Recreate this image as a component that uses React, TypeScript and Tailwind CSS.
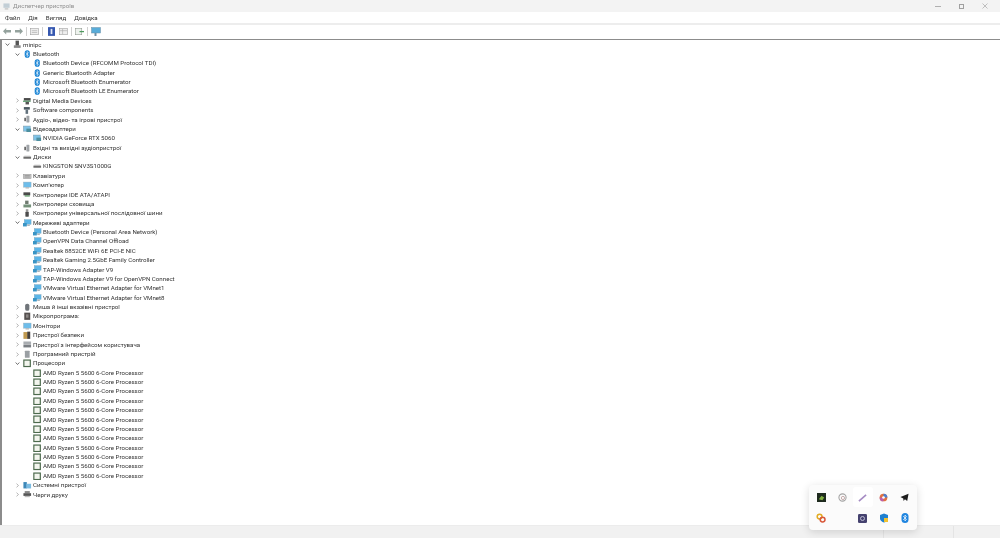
import type { ReactNode } from "react"

type IconName =
  | "pc" | "bt" | "media" | "soft" | "audio" | "monitor" | "disk" | "keyboard"
  | "computer" | "ide" | "storage" | "usb" | "net" | "mouse" | "firmware"
  | "security" | "hid" | "swdev" | "cpu" | "system" | "printer"

interface Row {
  label: string
  level: 0 | 1 | 2
  icon: IconName
  open?: boolean
}

const cpuRows: Row[] = Array.from({ length: 12 }, () => ({
  label: "AMD Ryzen 5 5600 6-Core Processor",
  level: 2,
  icon: "cpu",
}))

const rows: Row[] = [
  { label: "minipc", level: 0, icon: "pc", open: true },
  { label: "Bluetooth", level: 1, icon: "bt", open: true },
  { label: "Bluetooth Device (RFCOMM Protocol TDI)", level: 2, icon: "bt" },
  { label: "Generic Bluetooth Adapter", level: 2, icon: "bt" },
  { label: "Microsoft Bluetooth Enumerator", level: 2, icon: "bt" },
  { label: "Microsoft Bluetooth LE Enumerator", level: 2, icon: "bt" },
  { label: "Digital Media Devices", level: 1, icon: "media" },
  { label: "Software components", level: 1, icon: "soft" },
  { label: "Аудіо-, відео- та ігрові пристрої", level: 1, icon: "audio" },
  { label: "Відеоадаптери", level: 1, icon: "monitor", open: true },
  { label: "NVIDIA GeForce RTX 5060", level: 2, icon: "monitor" },
  { label: "Вхідні та вихідні аудіопристрої", level: 1, icon: "audio" },
  { label: "Диски", level: 1, icon: "disk", open: true },
  { label: "KINGSTON SNV3S1000G", level: 2, icon: "disk" },
  { label: "Клавіатури", level: 1, icon: "keyboard" },
  { label: "Комп'ютер", level: 1, icon: "computer" },
  { label: "Контролери IDE ATA/ATAPI", level: 1, icon: "ide" },
  { label: "Контролери сховища", level: 1, icon: "storage" },
  { label: "Контролери універсальної послідовної шини", level: 1, icon: "usb" },
  { label: "Мережеві адаптери", level: 1, icon: "net", open: true },
  { label: "Bluetooth Device (Personal Area Network)", level: 2, icon: "net" },
  { label: "OpenVPN Data Channel Offload", level: 2, icon: "net" },
  { label: "Realtek 8852CE WiFi 6E PCI-E NIC", level: 2, icon: "net" },
  { label: "Realtek Gaming 2.5GbE Family Controller", level: 2, icon: "net" },
  { label: "TAP-Windows Adapter V9", level: 2, icon: "net" },
  { label: "TAP-Windows Adapter V9 for OpenVPN Connect", level: 2, icon: "net" },
  { label: "VMware Virtual Ethernet Adapter for VMnet1", level: 2, icon: "net" },
  { label: "VMware Virtual Ethernet Adapter for VMnet8", level: 2, icon: "net" },
  { label: "Миша й інші вказівні пристрої", level: 1, icon: "mouse" },
  { label: "Мікропрограма:", level: 1, icon: "firmware" },
  { label: "Монітори", level: 1, icon: "computer" },
  { label: "Пристрої безпеки", level: 1, icon: "security" },
  { label: "Пристрої з інтерфейсом користувача", level: 1, icon: "hid" },
  { label: "Програмний пристрій", level: 1, icon: "swdev" },
  { label: "Процесори", level: 1, icon: "cpu", open: true },
  ...cpuRows,
  { label: "Системні пристрої", level: 1, icon: "system" },
  { label: "Черги друку", level: 1, icon: "printer" },
]

function TreeIcon({ name }: { name: IconName }) {
  const shapes: Record<IconName, ReactNode> = {
    pc: (
      <>
        <rect x="3" y="0.5" width="4" height="6" fill="#555" />
        <rect x="1" y="6" width="8" height="3" fill="#888" />
      </>
    ),
    bt: (
      <>
        <rect x="2" y="0" width="6" height="9" rx="3" fill="#1682d4" />
        <path d="M3.4 2.8 6.4 6 5 7.5V1.5L6.4 3 3.4 6.2" stroke="#fff" strokeWidth="0.7" fill="none" />
      </>
    ),
    media: (
      <>
        <rect x="1" y="1" width="8" height="3" fill="#4a4a4a" />
        <rect x="0" y="4" width="9" height="1.5" fill="#5c9b6d" />
        <rect x="3" y="5.5" width="4" height="3" fill="#555" />
      </>
    ),
    soft: (
      <>
        <rect x="1" y="1" width="7" height="3" fill="#4d5a62" />
        <rect x="3" y="4" width="3" height="5" fill="#63727c" />
      </>
    ),
    audio: (
      <>
        <rect x="4" y="0.5" width="3.5" height="8" rx="0.5" fill="#a0a4a8" />
        <rect x="1.5" y="3" width="2" height="4" fill="#666" />
      </>
    ),
    monitor: (
      <>
        <rect x="0.5" y="1" width="8" height="6" fill="#7fc4e8" stroke="#7d98a8" strokeWidth="0.6" />
        <rect x="4" y="4" width="5.5" height="4" fill="#4d8f9f" />
      </>
    ),
    disk: (
      <>
        <rect x="0.5" y="4" width="9" height="2.5" fill="#6d6d6d" />
        <rect x="1.5" y="3" width="7" height="1" fill="#b5b5b5" />
      </>
    ),
    keyboard: (
      <>
        <rect x="0.5" y="2.5" width="9" height="5" fill="#c4c4c4" stroke="#888" strokeWidth="0.5" />
        <path d="M2 4h6M2 5.7h6" stroke="#777" strokeWidth="0.6" />
      </>
    ),
    computer: (
      <>
        <rect x="0.5" y="1" width="9" height="6" fill="#6dbdea" stroke="#9ab0bd" strokeWidth="0.5" />
        <rect x="3" y="7.3" width="4" height="1.2" fill="#aaa" />
      </>
    ),
    ide: (
      <>
        <rect x="0.5" y="2.5" width="8" height="3.5" fill="#4a4a4a" />
        <rect x="2" y="6" width="6" height="1.5" fill="#5d9a68" />
      </>
    ),
    storage: (
      <>
        <rect x="2.5" y="0.5" width="4" height="4" fill="#6f7a70" />
        <rect x="0.5" y="5" width="9" height="3.5" fill="#74917a" />
      </>
    ),
    usb: (
      <>
        <rect x="3.3" y="0" width="3" height="3" fill="#9a9a9a" />
        <rect x="2.8" y="3" width="4" height="6" rx="1" fill="#4c4c4c" />
      </>
    ),
    net: (
      <>
        <rect x="1.5" y="0.5" width="8" height="5.5" fill="#5cb6e8" stroke="#7fa3b8" strokeWidth="0.5" />
        <rect x="0" y="4.5" width="4.5" height="4" fill="#3a94c4" />
        <rect x="5" y="6.5" width="3" height="1.5" fill="#aab4ba" />
      </>
    ),
    mouse: <rect x="2.5" y="0.5" width="5" height="8.5" rx="2.3" fill="#70757a" />,
    firmware: (
      <>
        <rect x="1.5" y="0.5" width="7" height="8.5" fill="#55504f" />
        <rect x="3.5" y="2.5" width="3" height="4" fill="#8c8785" />
      </>
    ),
    security: (
      <>
        <rect x="0.5" y="1" width="5" height="8" fill="#c09a50" />
        <rect x="5" y="0.5" width="3.5" height="8.5" fill="#45413e" />
      </>
    ),
    hid: (
      <>
        <rect x="0.5" y="1.5" width="9" height="3" fill="#a9adb1" />
        <rect x="0.5" y="5" width="9" height="3.5" fill="#7a7f84" />
      </>
    ),
    swdev: <rect x="2.2" y="0.5" width="5.6" height="8.5" rx="0.6" fill="#9a9fa3" />,
    cpu: <rect x="1" y="1" width="7.6" height="7.6" fill="#f3f5ee" stroke="#4d6a4d" strokeWidth="1.4" />,
    system: (
      <>
        <rect x="0.5" y="1" width="4" height="7.5" fill="#3e88b8" />
        <rect x="4" y="3" width="5.5" height="5.5" fill="#7cbce2" />
      </>
    ),
    printer: (
      <>
        <rect x="2" y="1" width="6" height="2.5" fill="#8a8a8a" />
        <rect x="0.5" y="3.5" width="9" height="3.2" fill="#555" />
        <rect x="2" y="6.7" width="6" height="1.5" fill="#bbb" />
      </>
    ),
  }
  return (
    <svg viewBox="0 0 10 9.5" className="h-[8.5px] w-[8.5px] shrink-0">
      {shapes[name]}
    </svg>
  )
}

function Chevron({ open }: { open?: boolean }) {
  return (
    <svg viewBox="0 0 6 6" className="size-[5px] shrink-0">
      {open ? (
        <path d="M0.8 1.8 3 4.2 5.2 1.8" fill="none" stroke="#555" strokeWidth="1" />
      ) : (
        <path d="M1.8 0.8 4.2 3 1.8 5.2" fill="none" stroke="#a6a6a6" strokeWidth="1" />
      )}
    </svg>
  )
}

function TreeRow({ row }: { row: Row }) {
  const indent = row.level === 0 ? "pl-[3px]" : row.level === 1 ? "pl-[13px]" : "pl-[23px]"
  return (
    <div className={`flex h-[9.39px] items-center whitespace-nowrap ${indent}`}>
      <span className="flex w-[8px] shrink-0 items-center">
        {row.level < 2 && <Chevron open={row.open} />}
      </span>
      <TreeIcon name={row.icon} />
      <span className="ml-[1.5px] text-[6.15px] leading-none text-[#333]">{row.label}</span>
    </div>
  )
}

function Sep() {
  return <span className="mx-[2px] h-[9px] w-px bg-[#d0d0d0]" />
}

function Toolbar() {
  return (
    <div className="flex h-[14px] items-center gap-[1px] pb-[1px] pl-[3px]">
      <svg viewBox="0 0 10 8" className="w-[8px]"><path d="M0 4 4 0v2.4h6v3.2H4V8z" fill="#94a29d" /></svg>
      <svg viewBox="0 0 10 8" className="ml-[3px] w-[8px]"><path d="M10 4 6 0v2.4H0v3.2h6V8z" fill="#94a29d" /></svg>
      <Sep />
      <svg viewBox="0 0 10 8" className="w-[9px]">
        <rect x="0.5" y="0.5" width="9" height="7" fill="#eee" stroke="#999" strokeWidth="0.6" />
        <path d="M2 3h6M2 5h6" stroke="#aaa" strokeWidth="0.7" />
      </svg>
      <Sep />
      <svg viewBox="0 0 8 10" className="ml-[2px] h-[9px] w-[7px]">
        <rect width="8" height="10" fill="#3557b0" />
        <rect x="3" y="2" width="2" height="6" fill="#dfe6f5" />
      </svg>
      <svg viewBox="0 0 10 8" className="ml-[3px] w-[9px]">
        <rect x="0.5" y="0.5" width="9" height="7" fill="#eee" stroke="#999" strokeWidth="0.6" />
        <path d="M4 1v6M1 3h8" stroke="#aaa" strokeWidth="0.7" />
      </svg>
      <Sep />
      <svg viewBox="0 0 10 8" className="w-[9px]">
        <rect x="0.5" y="0.5" width="7" height="7" fill="#eef2ee" stroke="#8a948a" strokeWidth="0.6" />
        <path d="M5 4h5" stroke="#4c9a5c" strokeWidth="1.4" />
      </svg>
      <Sep />
      <svg viewBox="0 0 10 9" className="w-[10px]">
        <rect x="0.5" y="0.5" width="9" height="5.5" fill="#58acd9" stroke="#6d8fa5" strokeWidth="0.5" />
        <rect x="3.5" y="6" width="2" height="3" fill="#6d8fa5" />
      </svg>
    </div>
  )
}

function TrayPopup() {
  return (
    <div className="absolute left-[809px] top-[485px] grid h-[45px] w-[108px] grid-cols-5 grid-rows-[21px_21px] place-items-center rounded-[4px] bg-[#fbfbfb] px-[2px] pt-[1.5px] shadow-[0_2px_8px_rgba(0,0,0,0.14)]">
      <svg viewBox="0 0 10 10" className="size-[9px]">
        <rect width="10" height="10" fill="#1e2a1e" />
        <path d="M2 7 5 3l3 2-2 3z" fill="#7fae3f" />
      </svg>
      <svg viewBox="0 0 10 10" className="size-[9px]">
        <circle cx="5" cy="5" r="4" fill="none" stroke="#a5a5a5" strokeWidth="1.2" />
        <circle cx="5.5" cy="5.5" r="1.8" fill="none" stroke="#b99a9a" strokeWidth="0.9" />
      </svg>
      <span className="flex size-[20px] items-center justify-center rounded-[3px] bg-white">
        <svg viewBox="0 0 10 10" className="size-[9px]">
          <path d="M1 9 9 2" stroke="#a68cc4" strokeWidth="1.8" />
        </svg>
      </span>
      <svg viewBox="0 0 10 10" className="size-[9px]">
        <circle cx="5" cy="5" r="4.3" fill="#e2713e" />
        <path d="M5 .7A4.3 4.3 0 0 1 9.3 5H5z" fill="#4a7fd0" />
        <path d="M.7 5A4.3 4.3 0 0 0 5 9.3V5z" fill="#b95fb0" />
        <circle cx="5" cy="5" r="1.5" fill="#fff" />
      </svg>
      <svg viewBox="0 0 10 10" className="size-[9px]">
        <path d="M0.5 4.5 9.5 0.8 8 9 5.5 7 4 8.8 3.6 6z" fill="#1c1c1c" />
      </svg>
      <svg viewBox="0 0 10 10" className="size-[10px]">
        <circle cx="3.6" cy="3.6" r="2.4" fill="none" stroke="#e2ab22" strokeWidth="1.5" />
        <circle cx="6.6" cy="6.6" r="2.4" fill="none" stroke="#d9583a" strokeWidth="1.5" />
      </svg>
      <span />
      <svg viewBox="0 0 10 10" className="size-[9px]">
        <rect width="10" height="10" rx="1.5" fill="#45426f" />
        <circle cx="5" cy="5" r="2.2" fill="none" stroke="#c9c9de" strokeWidth="1" />
      </svg>
      <svg viewBox="0 0 10 10" className="size-[10px]">
        <path d="M5 0.5 9 2v3.5C9 7.5 7 9 5 9.5 3 9 1 7.5 1 5.5V2z" fill="#1f7fcf" />
        <path d="M5 5h4v4H5z" fill="#f2c230" />
      </svg>
      <svg viewBox="0 0 8 10" className="h-[10px] w-[8px]">
        <rect x="0.5" width="7" height="10" rx="3.5" fill="#2186e0" />
        <path d="M2.2 3 5.4 6.4 4 8V2L5.4 3.6 2.2 7" stroke="#fff" strokeWidth="0.7" fill="none" />
      </svg>
    </div>
  )
}

export default function App() {
  return (
    <div className="relative flex h-[538px] w-[1000px] flex-col overflow-hidden bg-white font-['Roboto','Noto_Sans',sans-serif] blur-[0.3px]">
      <header className="flex h-[12px] items-center justify-between bg-[#f3f3f3]">
        <div className="flex items-center gap-[3px] pl-[3px]">
          <svg viewBox="0 0 8 8" className="size-[7px]">
            <rect x="0.5" y="0.5" width="7" height="5" fill="#c2ced6" />
            <rect x="2" y="6" width="4" height="1.5" fill="#c4c4c4" />
          </svg>
          <span className="text-[6.15px] leading-none text-[#8f8f8f]">Диспетчер пристроїв</span>
        </div>
        <div className="flex items-center gap-[18px] pr-[12px]">
          <span className="h-px w-[6px] bg-[#b0b0b0]" />
          <span className="size-[5px] border border-[#a0a0a0]" />
          <svg viewBox="0 0 6 6" className="size-[6px]">
            <path d="M.5.5l5 5M5.5.5l-5 5" stroke="#b0b0b0" strokeWidth="0.8" />
          </svg>
        </div>
      </header>
      <nav className="flex h-[11px] items-center gap-[8px] bg-white pl-[5px] pt-[1px] text-[6.15px] leading-none text-[#333]">
        <span>Файл</span>
        <span>Дія</span>
        <span>Вигляд</span>
        <span>Довідка</span>
      </nav>
      <div className="h-[2px] bg-[#ededed]" />
      <Toolbar />
      <main className="min-h-0 flex-1 border-t-[1.5px] border-l-[2px] border-[#8c8c8c]">
        {rows.map((row, i) => (
          <TreeRow key={i} row={row} />
        ))}
      </main>
      <footer className="flex h-[13px] shrink-0 justify-end border-t border-[#ececec] bg-[#f1f1f1]">
        <span className="w-[70px] border-l border-[#e4e4e4]" />
        <span className="w-[47px] border-l border-[#e4e4e4]" />
      </footer>
      <TrayPopup />
    </div>
  )
}
